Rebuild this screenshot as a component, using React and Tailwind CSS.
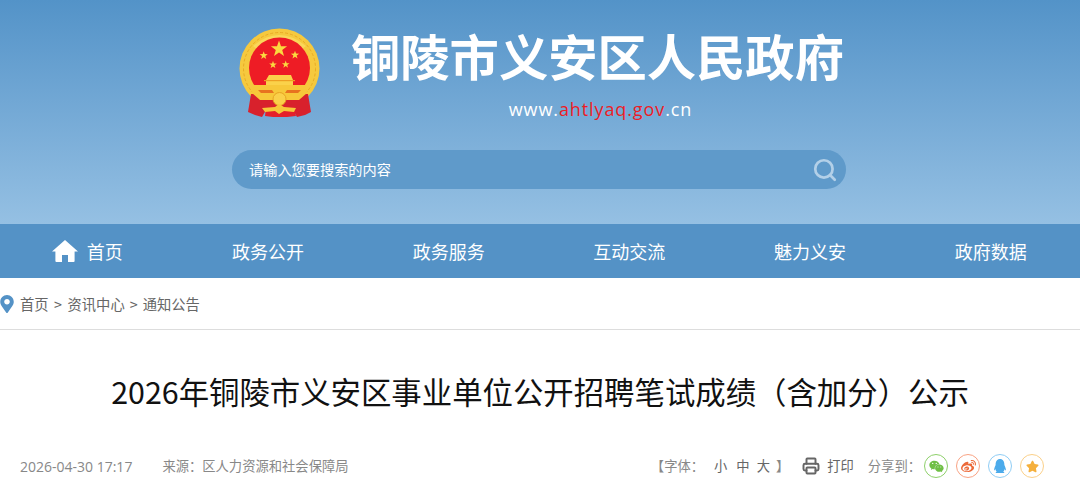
import { FaMapMarkerAlt, FaWeixin, FaWeibo, FaQq, FaStar } from 'react-icons/fa'
import { Search, Printer } from 'lucide-react'

const navItems = ['政务公开', '政务服务', '互动交流', '魅力义安', '政府数据']

const starPoints = (cx, cy, r) => {
  const pts = []
  for (let i = 0; i < 10; i++) {
    const rad = i % 2 === 0 ? r : r * 0.4
    const a = -Math.PI / 2 + (i * Math.PI) / 5
    pts.push(`${cx + rad * Math.cos(a)},${cy + rad * Math.sin(a)}`)
  }
  return pts.join(' ')
}

const Emblem = () => (
  <svg width="82" height="92" viewBox="0 0 82 92" className="shrink-0">
    <defs>
      <clipPath id="ringClip">
        <rect x="0" y="0" width="82" height="70" />
      </clipPath>
    </defs>
    {/* gold ring */}
    <g clipPath="url(#ringClip)">
      <circle cx="40.5" cy="40.5" r="40" fill="#f6c93e" />
      <circle cx="40.5" cy="40.5" r="36" fill="none" stroke="#e9ab25" strokeWidth="1" strokeDasharray="3 2" />
    </g>
    <path d="M14 18 Q40 -4 67 18 L63 21 Q40 4 18 21 Z" fill="#fad75a" />
    {/* red field */}
    <circle cx="40.5" cy="40" r="30.5" fill="#ee1c25" />
    {/* stars */}
    <polygon points={starPoints(40, 21, 8.5)} fill="#fbd93f" />
    <polygon points={starPoints(24.7, 27.5, 4.3)} fill="#fbd93f" />
    <polygon points={starPoints(56, 27, 4.3)} fill="#fbd93f" />
    <polygon points={starPoints(34, 36.8, 4)} fill="#fbd93f" />
    <polygon points={starPoints(46.7, 36.5, 4)} fill="#fbd93f" />
    {/* tiananmen */}
    <path d="M30 47 H52 L54 52 V58 H27 V52 Z" fill="#fbd24a" />
    <rect x="25" y="52" width="31" height="1.2" fill="#ee9f22" />
    {/* ribbons */}
    <path d="M12 66 L9 84 L16 87 L23 89 L27 82 L54 82 L58 89 L66 87 L72 84 L69 66 Z" fill="#d8212c" />
    <path d="M27 80 H55 L57 88 L48 89 H34 L26 88 Z" fill="#e5202a" />
    {/* band */}
    <path d="M14 57 H67 L68 65 L60 72 H21 L13 65 Z" fill="#f7c83a" />
    <path d="M19 62 H33 L35 65 H22 Z M62 62 H48 L46 65 H59 Z" fill="#e8731f" />
    {/* gear */}
    <circle cx="40.5" cy="71" r="6.5" fill="#fad04a" stroke="#e8a522" strokeWidth="1" />
    {/* ribbon knot */}
    <path d="M23 80 L36 79 L40 76 L45 79 L57 80 L55 84 L45 83 L40 86 L36 83 L26 84 Z" fill="#f7c83a" />
  </svg>
)

const HomeIcon = () => (
  <svg width="26" height="22" viewBox="0 0 26 22" fill="#ffffff" className="shrink-0">
    <path d="M13 0 L26 11.5 L22.6 11.5 L22.6 21 Q22.6 22 21.6 22 L16 22 L16 15 L10 15 L10 22 L4.4 22 Q3.4 22 3.4 21 L3.4 11.5 L0 11.5 Z" />
  </svg>
)

const ShareIcon = ({ ring, children }) => (
  <span className={`flex h-6 w-6 items-center justify-center rounded-full border ${ring}`}>
    {children}
  </span>
)

export default function App() {
  return (
    <div
      className="h-[484px] w-[1080px] overflow-hidden bg-white"
      style={{ fontFamily: '"Noto Sans CJK SC", "Noto Sans", sans-serif' }}
    >
      {/* Header */}
      <header className="h-[224px] bg-gradient-to-b from-[#5393c8] to-[#95c0e3]">
        <div className="mx-auto w-[614px] -translate-x-[1px] pt-[28px]">
          <div className="flex h-[122px] pl-[7px]">
            <Emblem />
            <div className="ml-[30px] flex flex-col items-center">
              <h1 className="-mt-[3px] text-[49.3px] leading-[60px] font-bold whitespace-nowrap text-white">铜陵市义安区人民政府</h1>
              <div className="mt-[12px] translate-x-[3px] text-[18px] leading-6 tracking-[0.9px] text-white" style={{ fontFamily: '"Open Sans", sans-serif' }}>
                www.<span className="text-[#ee1c25]">ahtlyaq.gov</span>.cn
              </div>
            </div>
          </div>
          <div className="flex h-[39px] items-center justify-between rounded-[20px] bg-[#5f9aca] pr-[8px] pl-[17px]">
            <span className="text-[14.2px] text-white">请输入您要搜索的内容</span>
            <Search size={26} strokeWidth={2.5} className="text-[#b3d0e8]" />
          </div>
        </div>
      </header>

      {/* Nav */}
      <nav className="-ml-[3px] grid h-[54px] w-[1084px] grid-cols-6 bg-[#5492c6] text-[18px] text-white">
        <div className="flex items-center justify-center gap-[9px]">
          <HomeIcon />
          <span>首页</span>
        </div>
        {navItems.map((item) => (
          <div key={item} className="flex items-center justify-center">{item}</div>
        ))}
      </nav>

      {/* Breadcrumb */}
      <div className="relative flex h-[52px] items-center border-b border-[#dddddd] pl-5 text-[14.3px] text-[#666666]">
        <FaMapMarkerAlt size={18} className="absolute top-[17px] -left-[2px] text-[#5492c6]" />
        <span>首页</span>
        <span className="mx-[5.5px]">&gt;</span>
        <span>资讯中心</span>
        <span className="mx-[5px]">&gt;</span>
        <span>通知公告</span>
      </div>

      {/* Title */}
      <h2 className="mt-[40px] text-center text-[30.4px] leading-[42px] whitespace-nowrap text-[#111111]">
        2026年铜陵市义安区事业单位公开招聘笔试成绩（含加分）公示
      </h2>

      {/* Meta */}
      <div className="mt-[40px] flex h-7 items-center justify-between pr-9 pl-5 text-[13.3px] text-[#888888]">
        <div className="flex items-center gap-[30px]">
          <span className="text-[14px]" style={{ fontFamily: '"Open Sans", sans-serif' }}>2026-04-30 17:17</span>
          <span>来源：区人力资源和社会保障局</span>
        </div>
        <div className="flex items-center">
          <span>【字体：</span>
          <span className="ml-[10px] text-[#666666]">小</span>
          <span className="ml-[9px] text-[#666666]">中</span>
          <span className="ml-[7px] text-[#666666]">大</span>
          <span className="ml-[6px]">】</span>
          <Printer size={18} strokeWidth={2.6} className="ml-[13px] text-[#666666]" />
          <span className="ml-[7px] text-[#666666]">打印</span>
          <span className="ml-[14px]">分享到：</span>
          <div className="ml-[3px] flex gap-2">
            <ShareIcon ring="border-[#8ed06a]"><FaWeixin size={15} className="text-[#6fbf45]" /></ShareIcon>
            <ShareIcon ring="border-[#f9a384]"><FaWeibo size={15} className="text-[#ec6a3a]" /></ShareIcon>
            <ShareIcon ring="border-[#8fcdf5]"><FaQq size={14} className="text-[#4cabeb]" /></ShareIcon>
            <ShareIcon ring="border-[#fbd089]"><FaStar size={13} className="text-[#f5b03d]" /></ShareIcon>
          </div>
        </div>
      </div>
    </div>
  )
}
